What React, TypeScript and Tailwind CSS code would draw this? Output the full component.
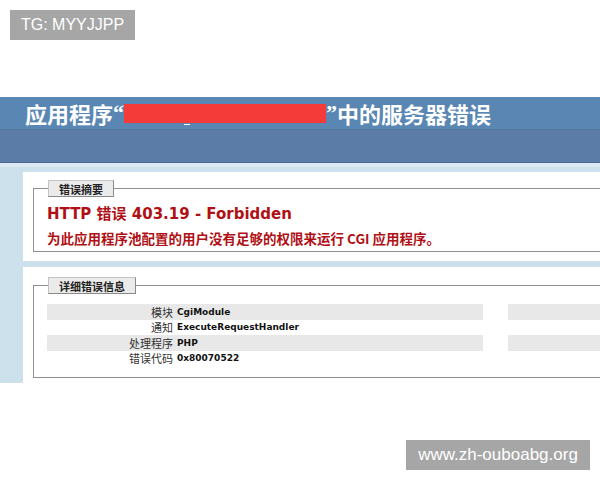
import React from 'react';

const cjk = '"Noto Sans CJK SC", sans-serif';
const mixed = '"DejaVu Sans", "Noto Sans CJK SC", sans-serif';
const serifQuote = '"Liberation Serif", serif';

const rows = [
  { label: '模块', value: 'CgiModule' },
  { label: '通知', value: 'ExecuteRequestHandler' },
  { label: '处理程序', value: 'PHP' },
  { label: '错误代码', value: '0x80070522' },
];

const Legend: React.FC<{ text: string }> = ({ text }) => (
  <legend
    className="ml-[1px] h-[17px] px-[10px] leading-[16px] text-[11px] font-bold text-[#222] bg-[#ebebeb] border border-[#c4c4c4] border-r-[#8a8a8a] border-b-[#8a8a8a]"
    style={{ fontFamily: cjk }}
  >
    {text}
  </legend>
);

export default function App() {
  return (
    <div className="relative w-[600px] h-[480px] overflow-hidden bg-white">
      <div className="pt-[97px]">
        {/* title band */}
        <div className="h-[32px] bg-[#5a86b3] flex items-center pl-[25px]">
          <h1
            className="text-[22px] font-bold text-white leading-none whitespace-nowrap flex items-center"
            style={{ fontFamily: cjk }}
          >
            <span>应用程序</span>
            <span style={{ fontFamily: serifQuote }}>“</span>
            <span className="relative inline-block w-[202px] h-[19px] bg-[#f53a3a]">
              <span className="absolute left-[60px] top-[20px] w-[6px] h-[1px] bg-white" />
            </span>
            <span style={{ fontFamily: serifQuote }}>”</span>
            <span>中的服务器错误</span>
          </h1>
        </div>
        <div className="h-[34px] bg-[#5a7ca6] border-t border-[#52759e] border-b border-b-[#48698f]" />
        <div className="h-[4px] bg-[#dce9f2]" />

        <div className="bg-[#cde1ed] pl-[23px] pt-[5px] flex flex-col gap-[6px]">
          {/* summary */}
          <div className="h-[89px] bg-white overflow-hidden pt-[8px] pl-[10px]">
            <fieldset className="w-[620px] border border-[#8f8f8f] pl-[13px] pb-[3px]">
              <Legend text="错误摘要" />
              <div
                className="mt-[7px] h-[20px] leading-[20px] text-[15px] font-bold text-[#b01015] whitespace-nowrap"
                style={{ fontFamily: mixed }}
              >
                HTTP 错误 403.19 - Forbidden
              </div>
              <div
                className="mt-[4px] h-[20px] leading-[20px] text-[13.5px] font-bold text-[#b01015] whitespace-nowrap"
                style={{ fontFamily: cjk }}
              >
                为此应用程序池配置的用户没有足够的权限来运行 CGI 应用程序。
              </div>
            </fieldset>
          </div>

          {/* details */}
          <div className="h-[116px] bg-white overflow-hidden pt-[10px] pl-[10px]">
            <fieldset className="w-[620px] border border-[#8f8f8f] pl-[13px] pb-[11px]">
              <Legend text="详细错误信息" />
              <div className="mt-[10px] flex flex-col">
                {rows.map((r, i) => (
                  <div
                    key={r.label}
                    className={`flex gap-[25px] ${i % 2 === 0 ? 'h-[16px]' : 'h-[15px]'}`}
                  >
                    <div
                      className={`w-[436px] flex items-center ${i % 2 === 0 ? 'bg-[#e8e8e8]' : ''}`}
                    >
                      <span
                        className="w-[126px] text-right text-[11px] text-[#333]"
                        style={{ fontFamily: cjk }}
                      >
                        {r.label}
                      </span>
                      <span
                        className="pl-[4px] pt-[1px] text-[9px] font-bold text-[#111]"
                        style={{ fontFamily: '"DejaVu Sans", sans-serif' }}
                      >
                        {r.value}
                      </span>
                    </div>
                    <div className={`w-[160px] ${i % 2 === 0 ? 'bg-[#e8e8e8]' : ''}`} />
                  </div>
                ))}
              </div>
            </fieldset>
          </div>
        </div>
      </div>

      {/* watermarks */}
      <div
        className="absolute left-[10px] top-[10px] w-[125px] h-[30px] bg-[#a6a6a6] text-white text-[16px] flex items-center justify-center"
        style={{ fontFamily: '"Liberation Sans", sans-serif' }}
      >
        TG: MYYJJPP
      </div>
      <div
        className="absolute left-[406px] top-[440px] w-[184px] h-[30px] bg-[#a6a6a6] text-white text-[17px] flex items-center justify-center"
        style={{ fontFamily: '"Liberation Sans", sans-serif' }}
      >
        www.zh-ouboabg.org
      </div>
    </div>
  );
}
